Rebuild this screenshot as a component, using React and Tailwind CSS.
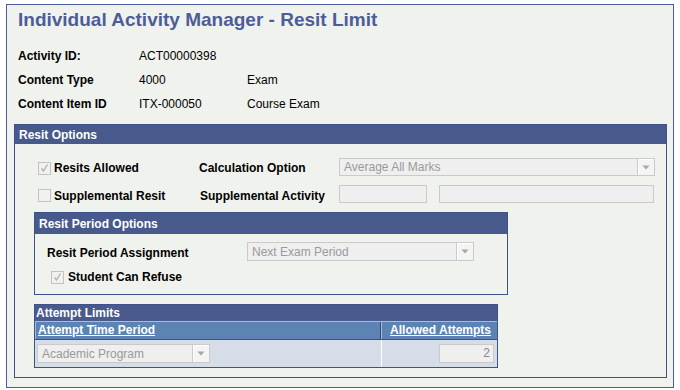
import React from 'react'

function Check({ checked }) {
  return (
    <span className="flex h-[13px] w-[13px] shrink-0 items-center justify-center border border-[#c2c2c2] bg-[#f1f1f1]">
      {checked ? (
        <svg width="11" height="11" viewBox="0 0 11 11">
          <path d="M2.5 5.5 L4.5 8 L8.5 1.5" fill="none" stroke="#b4b4b4" strokeWidth="1.4" />
        </svg>
      ) : null}
    </span>
  )
}

function Select({ value, className }) {
  return (
    <div className={`flex items-stretch border border-[#cacaca] bg-[#efefef] font-normal ${className}`}>
      <span className="flex flex-1 items-center truncate pl-[4px] text-[12px] leading-[16px] text-[#9a9a9a]">{value}</span>
      <span className="flex w-[17px] items-center justify-center border-l border-[#cacaca] bg-[#f4f4f4] shadow-[inset_1px_1px_0_#ffffff]">
        <svg width="8" height="5" viewBox="0 0 8 5"><path d="M0.5 0.5 L7.5 0.5 L4 4.5 Z" fill="#a6a6a6" /></svg>
      </span>
    </div>
  )
}

function Field({ className, children }) {
  return <div className={`border border-[#cacaca] bg-[#efefef] text-[12px] font-normal leading-[16px] text-[#9a9a9a] ${className}`}>{children}</div>
}

export default function App() {
  return (
    <div className="h-[390px] w-[680px] bg-white pl-[6px] pt-[4px] font-['Liberation_Sans',Arial,sans-serif] text-black">
      <div className="h-[384px] w-[668px] border border-[#4b5b9b] bg-[#f0f2ee]">
        <h1 className="ml-[11px] mt-[4px] text-[19px] font-bold leading-[22px] text-[#4d5c9a]">Individual Activity Manager - Resit Limit</h1>

        <div className="ml-[11px] mt-[13px] text-[12px] leading-[16px]">
          {[
            ['Activity ID:', 'ACT00000398', ''],
            ['Content Type', '4000', 'Exam'],
            ['Content Item ID', 'ITX-000050', 'Course Exam'],
          ].map(([label, value, desc]) => (
            <div key={label} className="flex h-6 items-center">
              <span className="w-[121px] font-bold">{label}</span>
              <span className="w-[108px]">{value}</span>
              <span>{desc}</span>
            </div>
          ))}
        </div>

        <section className="ml-[7px] mt-[8px] h-[254px] w-[653px] border border-[#3f5189]">
          <div className="flex h-[19px] items-center bg-[#485a8b] pl-[4px] text-[12px] font-bold text-white">Resit Options</div>

          <div className="mt-[14px] flex h-[18px] items-center text-[12px] font-bold">
            <span className="ml-[23px] mt-[2px]"><Check checked /></span>
            <span className="ml-[3px] mt-[2px] w-[145px]">Resits Allowed</span>
            <span className="mt-[2px] w-[140px]">Calculation Option</span>
            <Select value="Average All Marks" className="h-[18px] w-[316px]" />
          </div>

          <div className="mt-[9px] flex h-[18px] items-center text-[12px] font-bold">
            <span className="ml-[23px] mt-[2px]"><Check /></span>
            <span className="ml-[3px] mt-[3px] w-[146px]">Supplemental Resit</span>
            <span className="mt-[3px] w-[139px]">Supplemental Activity</span>
            <Field className="h-[18px] w-[88px]" />
            <Field className="ml-[12px] h-[18px] w-[215px]" />
          </div>

          <div className="ml-[19px] mt-[9px] h-[83px] w-[474px] border border-[#3f5189]">
            <div className="flex h-[21px] items-center bg-[#485a8b] pl-[4px] text-[12px] font-bold text-white">Resit Period Options</div>
            <div className="mt-[8px] flex h-[19px] items-center text-[12px] font-bold">
              <span className="ml-[12px] mt-[3px] w-[200px]">Resit Period Assignment</span>
              <Select value="Next Exam Period" className="h-[19px] w-[227px]" />
            </div>
            <div className="mt-[7px] flex items-center text-[12px] font-bold">
              <span className="ml-[16px]"><Check checked /></span>
              <span className="ml-[4px]">Student Can Refuse</span>
            </div>
          </div>

          <div className="ml-[19px] mt-[9px] w-[464px] border border-[#3f5189] text-[12px]">
            <div className="h-[16px] bg-[#4a5a8c] pl-[1px] font-bold leading-[16px] text-white">Attempt Limits</div>
            <div className="flex h-[19px] border-t border-b border-t-[#a9bcd6] border-b-[#3f5189] bg-[#5b84b4] font-bold leading-[17px] text-white">
              <span className="w-[346px] border-l border-r border-l-[#a9bcd6] border-r-[#2f4a80] pl-[2px] underline">Attempt Time Period</span>
              <span className="flex-1 border-l border-[#a9bcd6] pr-[6px] text-right underline">Allowed Attempts</span>
            </div>
            <div className="flex h-[27px] items-center bg-[#d6dde8]">
              <div className="flex h-full w-[347px] items-center border-r border-white pl-[2px]">
                <Select value="Academic Program" className="h-[19px] w-[173px]" />
              </div>
              <div className="flex flex-1 justify-end pr-[3px]">
                <Field className="h-[19px] w-[55px] pr-[3px] text-right leading-[17px] text-[#888]">2</Field>
              </div>
            </div>
          </div>
        </section>
      </div>
    </div>
  )
}
